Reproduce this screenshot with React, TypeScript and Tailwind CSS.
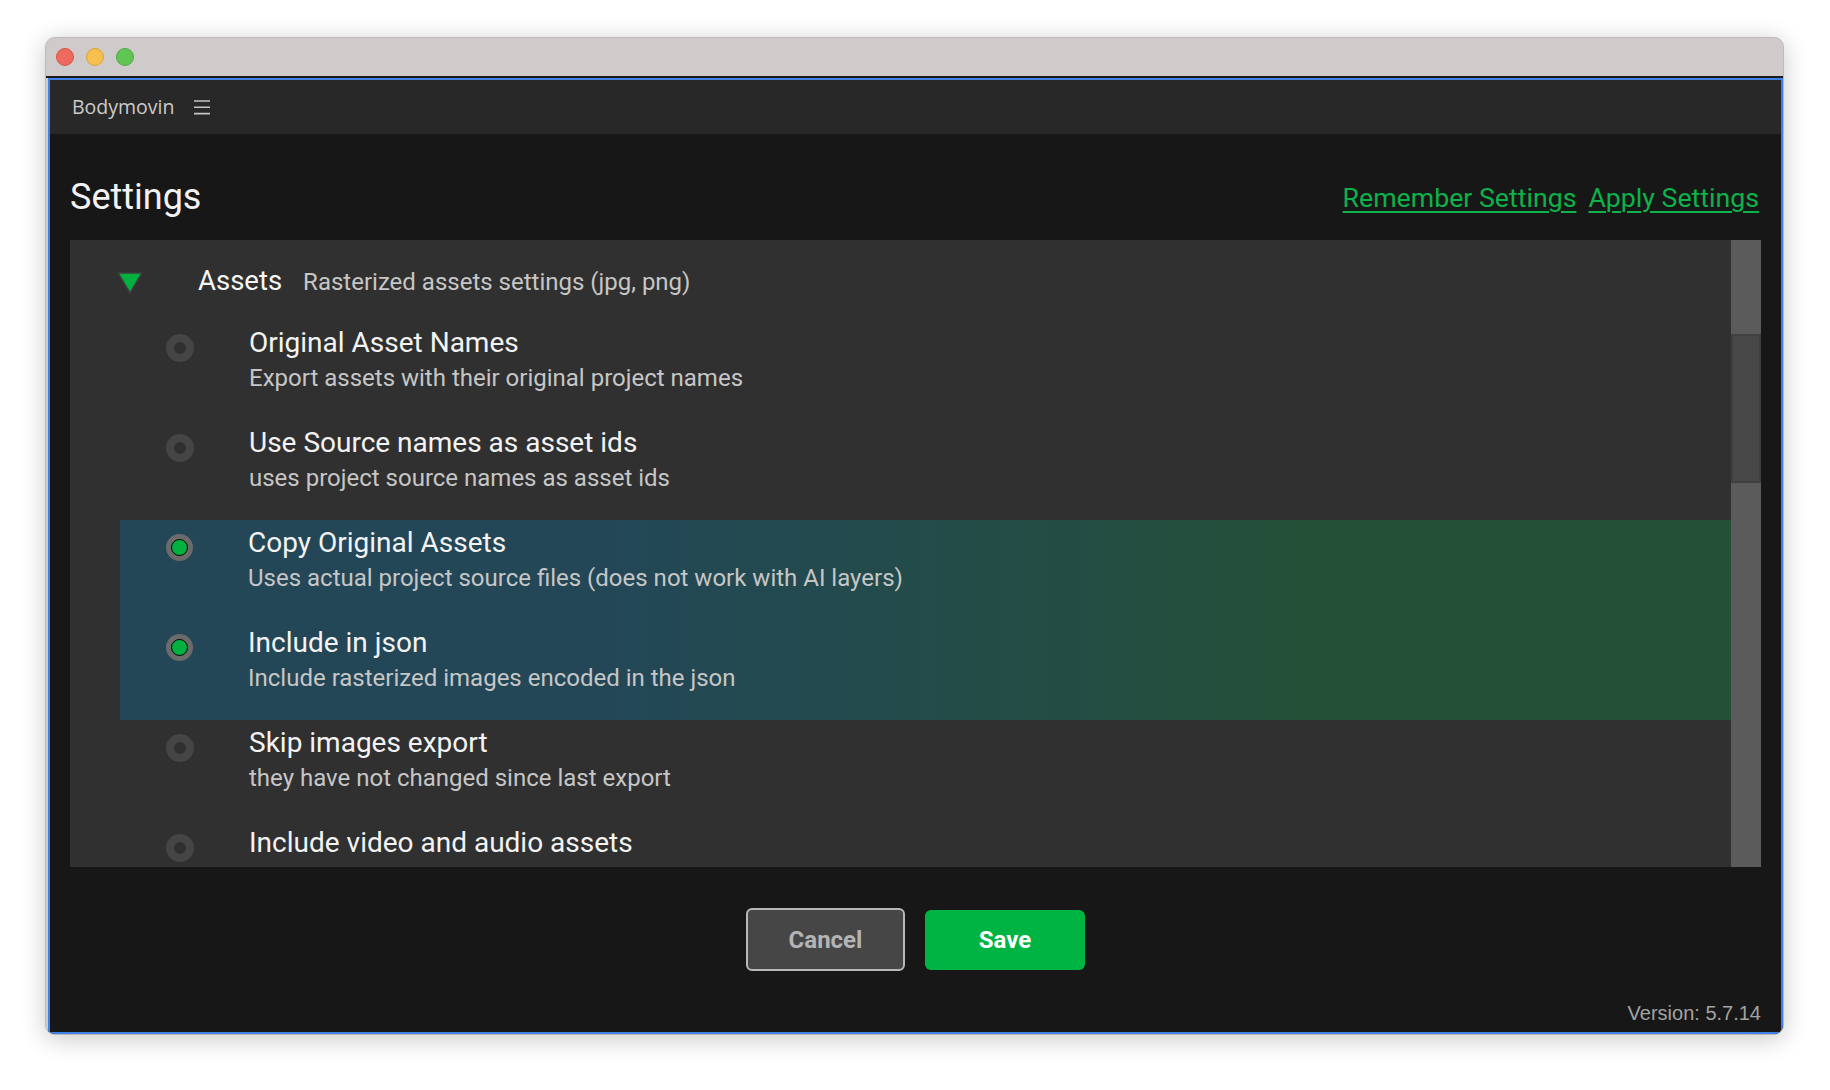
import React from "react";

const rows = [
  { title: "Original Asset Names", desc: "Export assets with their original project names", on: false },
  { title: "Use Source names as asset ids", desc: "uses project source names as asset ids", on: false },
  { title: "Copy Original Assets", desc: "Uses actual project source files (does not work with AI layers)", on: true },
  { title: "Include in json", desc: "Include rasterized images encoded in the json", on: true },
  { title: "Skip images export", desc: "they have not changed since last export", on: false },
  { title: "Include video and audio assets", desc: "These assets are not supported by all players, only available for some renderers", on: false },
];

function Radio({ on }: { on: boolean }) {
  if (on) {
    return (
      <div className="w-[27px] h-[27px] rounded-full bg-[#6b6b6b] flex items-center justify-center shrink-0">
        <div className="w-[17px] h-[17px] rounded-full bg-[#00b140] border-[1.5px] border-black" />
      </div>
    );
  }
  return <div className="w-[28px] h-[28px] rounded-full border-[8px] border-[#454545] shrink-0" />;
}

function Row({ title, desc, on }: { title: string; desc: string; on: boolean }) {
  return (
    <div className="h-[100px] flex">
      <div className="ml-[46px] mt-[14px]">
        <Radio on={on} />
      </div>
      <div className="ml-[55px] pt-[6px] flex flex-col">
        <div className="text-[28px] leading-[34px] text-[#f3f3f3] whitespace-nowrap">{title}</div>
        <div className="mt-[3px] text-[24px] leading-[30px] text-[#c6c6c6] whitespace-nowrap">{desc}</div>
      </div>
    </div>
  );
}

export default function App() {
  return (
    <div
      className="w-[1830px] h-[1090px] bg-white pt-[37px] pl-[45px] overflow-hidden"
      style={{ fontFamily: "Roboto, 'Liberation Sans', sans-serif" }}
    >
      <div className="w-[1739px] h-[998px] rounded-[10px] overflow-hidden bg-[#cfcbcb] border border-[#bdb9b9] shadow-[0_4px_24px_rgba(0,0,0,0.22)] flex flex-col">
        {/* title bar */}
        <div className="h-[38px] flex items-center pl-[10px] gap-[12px] shrink-0">
          <div className="w-[18px] h-[18px] rounded-full bg-[#ee6a5f] border border-[#d5554b]" />
          <div className="w-[18px] h-[18px] rounded-full bg-[#f5c04f] border border-[#d8a23b]" />
          <div className="w-[18px] h-[18px] rounded-full bg-[#61c554] border border-[#4ea842]" />
        </div>
        <div className="h-[2px] bg-[#1a1a1a] shrink-0" />
        {/* body */}
        <div className="flex-1 ml-[2px] mr-0 border-[2.5px] border-[#3f81e6] bg-[#171717] flex flex-col">
          {/* header */}
          <div className="h-[54px] bg-[#282828] flex items-center pl-[22px] shrink-0">
            <span
              className="text-[19.5px] text-[#cbcbcb]"
              style={{ fontFamily: "'Open Sans', 'Noto Sans', sans-serif" }}
            >
              Bodymovin
            </span>
            <svg className="ml-[20px]" width="16" height="16" viewBox="0 0 16 16">
              <g stroke="#c4c4c4" strokeWidth="1.6">
                <line x1="0" y1="2" x2="16" y2="2" />
                <line x1="0" y1="8.3" x2="16" y2="8.3" />
                <line x1="0" y1="14.6" x2="16" y2="14.6" />
              </g>
            </svg>
          </div>
          {/* main */}
          <div className="flex-1 flex flex-col px-[20px]">
            <div className="h-[106px] flex justify-between items-start pt-[42px] shrink-0">
              <div className="text-[36px] leading-[42px] text-[#f2f2f2]">Settings</div>
              <div className="flex gap-[12px] mt-[6px] mr-[2px] text-[26.7px] leading-[32px] text-[#0db24a]">
                <span className="underline underline-offset-[4px] decoration-[2px]">Remember Settings</span>
                <span className="underline underline-offset-[4px] decoration-[2px]">Apply Settings</span>
              </div>
            </div>
            {/* panel */}
            <div className="h-[627px] flex shrink-0">
              <div className="flex-1 bg-[#303030] overflow-hidden">
                <div className="h-[80px] flex">
                  <svg className="ml-[47px] mt-[32px]" width="26" height="22" viewBox="0 0 26 22">
                    <polygon points="1,1 25,1 13,21" fill="#00b140" stroke="#3d3d3d" strokeWidth="1.5" />
                  </svg>
                  <div className="ml-[55px] pt-[25px] flex items-baseline gap-[21px] whitespace-nowrap">
                    <span className="text-[27.5px] leading-[32px] text-[#f6f6f6]">Assets</span>
                    <span className="text-[24px] leading-[30px] text-[#c6c6c6]">Rasterized assets settings (jpg, png)</span>
                  </div>
                </div>
                <div className="ml-[50px]">
                  {rows.slice(0, 2).map((r) => (
                    <Row key={r.title} {...r} />
                  ))}
                  <div className="bg-linear-to-r from-[#234757] from-30% to-[#245037] to-75%">
                    {rows.slice(2, 4).map((r) => (
                      <Row key={r.title} {...r} />
                    ))}
                  </div>
                  {rows.slice(4).map((r) => (
                    <Row key={r.title} {...r} />
                  ))}
                </div>
              </div>
              {/* scrollbar */}
              <div className="w-[30px] bg-[#5b5b5b] flex flex-col">
                <div className="h-[94px]" />
                <div className="h-[149px] bg-[#484848] border-2 border-[#3f3f3f]" />
              </div>
            </div>
            {/* bottom */}
            <div className="flex-1 flex flex-col">
              <div className="mt-[41px] flex justify-center items-center gap-[20px]">
                <button className="w-[159px] h-[63px] rounded-[6px] bg-[#464646] border-2 border-[#b8b8b8] text-[24px] font-bold text-[#b4b4b4]">
                  Cancel
                </button>
                <button className="w-[160px] h-[60px] rounded-[6px] bg-[#00b443] text-[24px] font-bold text-white">
                  Save
                </button>
              </div>
              <div className="mt-[31px] flex justify-end">
                <span
                  className="text-[20px] leading-[23px] text-[#a3a3a3]"
                  style={{ fontFamily: "'Liberation Sans', Arial, sans-serif" }}
                >
                  Version: 5.7.14
                </span>
              </div>
            </div>
          </div>
        </div>
      </div>
    </div>
  );
}
